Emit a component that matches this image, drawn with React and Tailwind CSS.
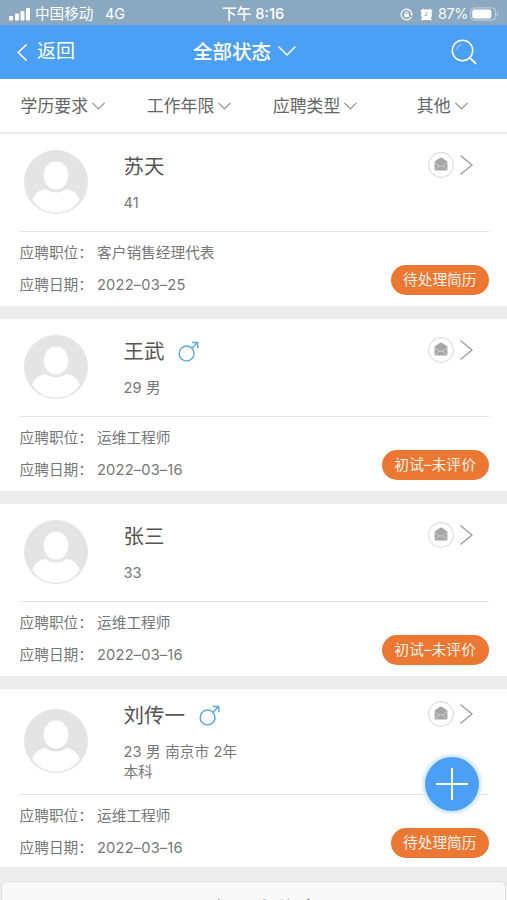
const applicants = [
  { name: '苏天', info: ['41'], job: '客户销售经理代表', date: '2022–03–25', status: '待处理简历' },
  { name: '王武', male: true, info: ['29 男'], job: '运维工程师', date: '2022–03–16', status: '初试–未评价' },
  { name: '张三', info: ['33'], job: '运维工程师', date: '2022–03–16', status: '初试–未评价' },
  { name: '刘传一', male: true, info: ['23 男 南京市 2年', '本科'], job: '运维工程师', date: '2022–03–16', status: '待处理简历' },
];

function ChevronDown({ className, strokeWidth = 1 }) {
  return (
    <svg viewBox="0 0 18 10" className={className} fill="none" stroke="currentColor" strokeWidth={strokeWidth} strokeLinecap="round" strokeLinejoin="round">
      <path d="M1 1 L9 9 L17 1" />
    </svg>
  );
}

function StatusBar() {
  return (
    <div className="flex h-[25px] shrink-0 items-center bg-[#8aa8c0] pt-[3px] pr-[4px] pl-[9px] text-white">
      <svg viewBox="0 0 22 14" className="h-[14px] w-[22px]" fill="white">
        <rect x="0" y="9" width="4" height="4.500" rx="1" />
        <rect x="6" y="6.500" width="4" height="7" rx="1" />
        <rect x="11.500" y="4" width="4" height="9.500" rx="1" />
        <rect x="17" y="1" width="4" height="12.500" rx="1" />
      </svg>
      <span className="ml-[4px] w-[70px] text-[14.600px] leading-[20px] whitespace-nowrap">中国移动</span>
      <span className="w-[117px] text-[14.500px] leading-[20px]">4G</span>
      <span className="w-[178px] text-[14.700px] leading-[20px] font-medium whitespace-nowrap">下午 8:16</span>
      <svg viewBox="0 0 14 14" className="h-[13px] w-[13px]" fill="none" stroke="white" strokeWidth="1.300">
        <path d="M12.300 9.500 A5.800 5.800 0 1 1 12.800 6.500" />
        <path d="M11 6.200 L14 6.200 L12.600 8.600 Z" fill="white" stroke="none" />
        <rect x="4.600" y="6.300" width="5" height="3.700" rx="0.500" fill="white" stroke="none" />
        <path d="M5.600 6.300 V5.300 a1.500 1.500 0 0 1 3 0 V6.300" strokeWidth="1" />
      </svg>
      <svg viewBox="0 0 14 14" className="ml-[7px] h-[13px] w-[13px]">
        <circle cx="7" cy="7.300" r="5.900" fill="white" />
        <path d="M1.800 3.400 L3.600 1.900 M12.200 3.400 L10.400 1.900 M3.400 11.500 L2.400 12.500 M10.600 11.500 L11.600 12.500" stroke="white" strokeWidth="2.200" strokeLinecap="round" />
        <path d="M7.300 4.500 V8 H4.800" fill="none" stroke="#8aa8c0" strokeWidth="1" />
      </svg>
      <span className="ml-[5px] w-[31px] text-[14.300px] leading-[20px] tracking-[-0.300px]">87%</span>
      <svg viewBox="0 0 30 14" className="ml-px h-[14px] w-[30px]">
        <rect x="0.600" y="0.900" width="25" height="12.200" rx="3.500" fill="none" stroke="#c5d3df" strokeWidth="1" />
        <rect x="2.300" y="2.600" width="19" height="8.800" rx="2" fill="white" />
        <path d="M27 4.600 Q29.200 7 27 9.400 Z" fill="#c5d3df" />
      </svg>
    </div>
  );
}

function Header() {
  return (
    <header className="flex h-[54px] shrink-0 items-center bg-[#4b9ff5] pl-[17px] text-white">
      <svg viewBox="0 0 10 17" className="h-[17px] w-[10px]" fill="none" stroke="white" strokeWidth="1.700" strokeLinecap="round" strokeLinejoin="round">
        <path d="M9 1 L1.200 8.500 L9 16" />
      </svg>
      <span className="ml-[10px] w-[156px] text-[19px] leading-[28px]">返回</span>
      <span className="w-[85px] text-[19.500px] leading-[28px] font-medium whitespace-nowrap">全部状态</span>
      <ChevronDown className="-mt-[2px] h-[10px] w-[18px]" strokeWidth={1.500} />
      <svg viewBox="0 0 26 26" className="ml-[155px] h-[26px] w-[26px]" fill="none" stroke="white" strokeLinecap="round">
        <circle cx="11.500" cy="11.500" r="10.200" strokeWidth="1.500" />
        <path d="M18.800 18.800 L24.600 24.400" strokeWidth="2" />
        <path d="M5.500 10.200 A6.500 6.500 0 0 1 10 5.700" strokeWidth="0.800" opacity="0.700" />
      </svg>
    </header>
  );
}

function Filters() {
  return (
    <nav className="flex h-[55px] shrink-0 items-center border-b-2 border-[#e9e9e9] bg-white pl-[20.500px] text-[16.900px] leading-[24px] text-[#666]">
      {[
        ['学历要求', 'w-[126.300px]'],
        ['工作年限', 'w-[126px]'],
        ['应聘类型', 'w-[144px]'],
        ['其他', 'w-[60px]'],
      ].map(([label, width]) => (
        <div key={label} className={'flex shrink-0 items-center gap-[4px] whitespace-nowrap ' + width}>
          <span>{label}</span>
          <ChevronDown className="mt-px h-[8px] w-[13px] text-[#888]" strokeWidth={1.400} />
        </div>
      ))}
    </nav>
  );
}

function Avatar() {
  return (
    <svg viewBox="0 0 64 64" className="h-[64px] w-[64px] shrink-0">
      <circle cx="32" cy="32" r="32" fill="#e4e4e4" />
      <path d="M8.300 50 C10.500 43.500 15 40.200 21.500 38.700 C27.500 43.700 36.500 43.700 42.500 38.700 C49 40.200 53.500 43.500 55.700 50 C50.500 58 42 62.500 32 62.500 C22 62.500 13.500 58 8.300 50 Z" fill="white" />
      <ellipse cx="32" cy="25.500" rx="12.300" ry="14" fill="white" />
    </svg>
  );
}

function MaleIcon() {
  return (
    <svg viewBox="0 0 22 22" className="mb-[2px] ml-[13.500px] h-[21px] w-[21px]" fill="none" stroke="#5ba6f3" strokeWidth="1.500">
      <circle cx="9" cy="13" r="7.800" />
      <path d="M14.500 7.600 L20.600 1.600 M14.500 1.500 H20.700 V7.700" />
    </svg>
  );
}

function MailIcon() {
  return (
    <svg viewBox="0 0 26 26" className="h-[26px] w-[26px]">
      <circle cx="13" cy="13" r="12.300" fill="white" stroke="#dedede" strokeWidth="1.200" />
      <path d="M6.600 9.600 L11.800 5.900 Q13 5.100 14.200 5.900 L19.400 9.600 V17.200 Q19.400 18.500 18.100 18.500 H7.900 Q6.600 18.500 6.600 17.200 Z" fill="#a6a6a6" />
      <path d="M7 10.800 L11.300 14 H14.700 L19 10.800 M11.300 14 L7.800 17.300 M14.700 14 L18.200 17.300" fill="none" stroke="#dadada" strokeWidth="0.800" />
    </svg>
  );
}

function Card({ person, last }) {
  return (
    <article className={'shrink-0 bg-white pr-[18.500px] pl-[19.500px] ' + (last ? 'h-[178px]' : 'h-[171.500px]')}>
      <div className={'flex border-b border-[#e4e4e4] pl-[4.500px] ' + (last ? 'h-[106px]' : 'h-[98px]')}>
        <div className={last ? 'pt-[20px]' : 'pt-[16px]'}>
          <Avatar />
        </div>
        <div className={'ml-[35.500px] flex-1 ' + (last ? 'pt-[12px]' : 'pt-[18px]')}>
          <div className="flex h-[30px] items-center text-[20.500px] leading-[30px] text-[#555]">
            <span>{person.name}</span>
            {person.male && <MaleIcon />}
          </div>
          <div className="mt-[11px] text-[14.600px] leading-[20px] text-[#777]">
            {person.info.map((line) => (
              <div key={line} className="[word-spacing:0.500px]">{line}</div>
            ))}
          </div>
        </div>
        <div className={'flex h-[42px] items-center gap-[6.500px] pr-[15.500px] ' + (last ? 'mt-[4px]' : 'mt-[10px]')}>
          <MailIcon />
          <svg viewBox="0 0 13 20" className="h-[20px] w-[13px]" fill="none" stroke="#a0a0a0" strokeWidth="1.500" strokeLinecap="round" strokeLinejoin="round">
            <path d="M1 1 L12 10 L1 19" />
          </svg>
        </div>
      </div>
      <div className="flex justify-between">
        <dl className="grid grid-cols-[77.500px_auto] pt-[5px] text-[14.700px] leading-[32px] whitespace-nowrap text-[#777]">
          <dt>应聘职位：</dt>
          <dd>{person.job}</dd>
          <dt>应聘日期：</dt>
          <dd className="tracking-[0.150px]">{person.date}</dd>
        </dl>
        <span className={'mt-[32.500px] h-[30px] rounded-full bg-[#eb7733] text-[14.700px] leading-[30px] text-[#fff3e8] ' + (person.status.includes('–') ? 'px-[12.500px] [letter-spacing:0.150px]' : 'px-[12px]')}>{person.status}</span>
      </div>
    </article>
  );
}

export default function App() {
  return (
    <div className="relative flex h-[900px] w-[507px] flex-col overflow-hidden bg-[#ededed] font-['Inter','Noto_Sans_CJK_SC',sans-serif]">
      <StatusBar />
      <Header />
      <Filters />
      <main className="flex flex-col gap-[13.500px]">
        {applicants.map((person, i) => (
          <Card key={person.name} person={person} last={i === 3} />
        ))}
        <button className="mx-px h-[58px] shrink-0 rounded-[6px] border border-[#dedede] bg-[#f8f8f8] text-[22px] leading-[32px] text-[#222]">没有更多信息</button>
      </main>
      <button className="absolute top-[757px] left-[425px] flex h-[54px] w-[54px] items-center justify-center rounded-full bg-[#4b9ff5] shadow-[0_0_2px_3px_#d8ecff]">
        <svg viewBox="0 0 32 32" className="h-[32px] w-[32px]" stroke="white" strokeWidth="2">
          <path d="M16 0 V32 M0 16 H32" />
        </svg>
      </button>
    </div>
  );
}
